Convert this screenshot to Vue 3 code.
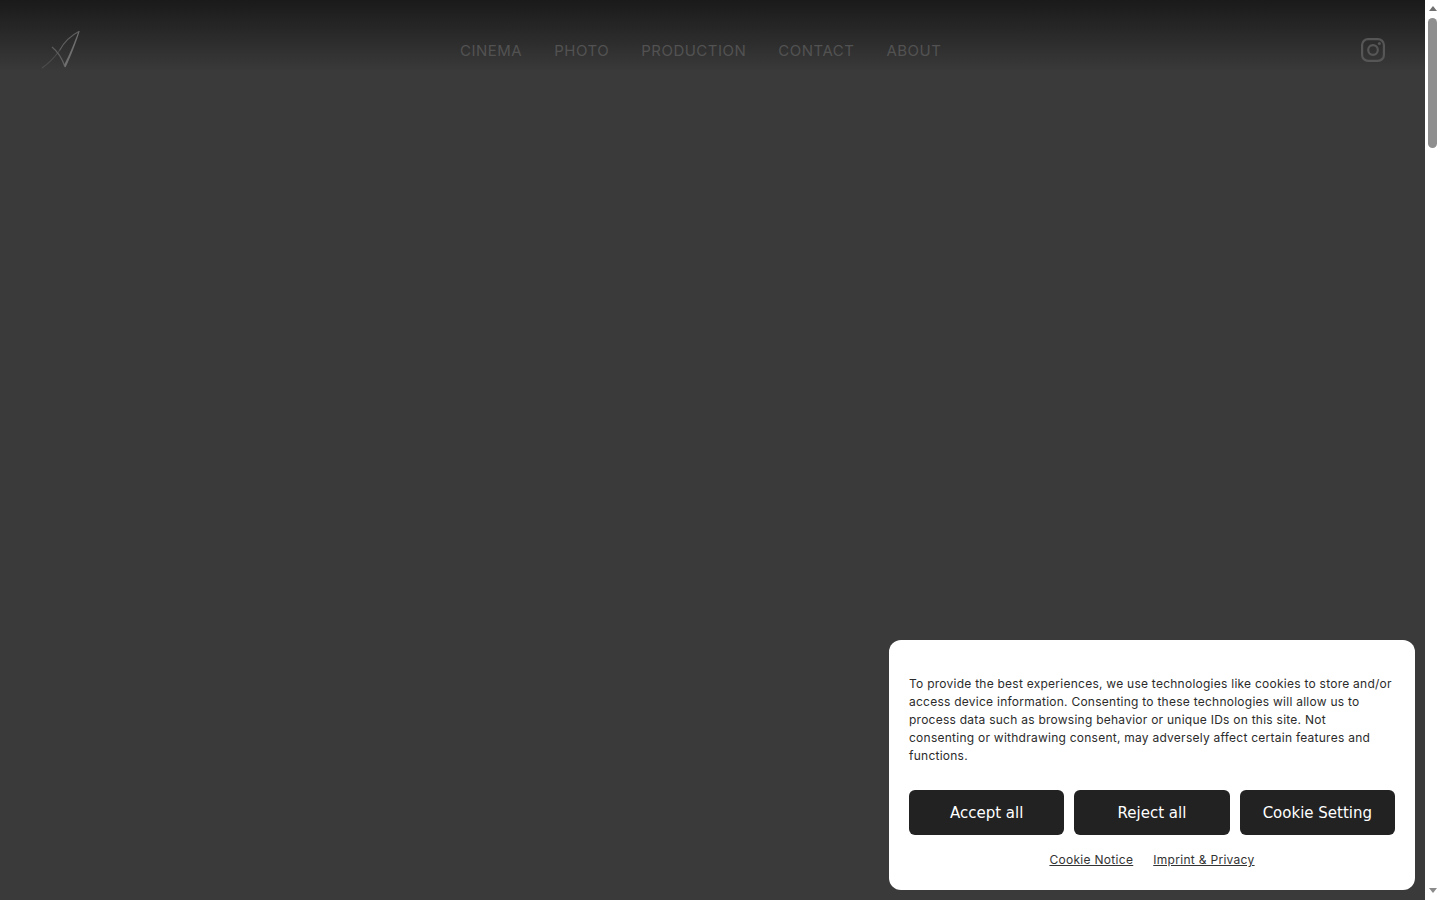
<template>
  <div class="page">
    <div class="viewport">
      <header class="site-header">
        <a class="logo" href="#" aria-label="Home">
          <svg width="40" height="40" viewBox="0 0 40 40">
            <path class="logo-fade" d="M2 38C8 34 14 28 19.500 20.500" />
            <path class="logo-thin" d="M19.500 20.500C23 14 30 6 39.300 1.300" />
            <path class="logo-thin" d="M12 17C17 21 22 28 25 37" />
            <path class="logo-main" d="M39.700 1L38 2.500C35 11 30 24 24 35L25.500 37.500C30.500 27 36 13 39.700 1Z" />
          </svg>
        </a>
        <nav class="main-nav">
          <a v-for="item in navItems" :key="item" href="#">{{ item }}</a>
        </nav>
        <a class="social" href="#" aria-label="Instagram">
          <svg width="24" height="24" viewBox="0 0 24 24">
            <rect x="1.100" y="1.100" width="21.800" height="21.800" rx="6" />
            <circle cx="12" cy="12" r="4.800" />
            <circle class="dot" cx="18.400" cy="5.600" r="1.500" />
          </svg>
        </a>
      </header>
    </div>

    <div class="scrollbar" aria-hidden="true">
      <span class="arrow arrow-up"></span>
      <span class="thumb"></span>
      <span class="arrow arrow-down"></span>
    </div>

    <section class="cookie-banner">
      <p>
        To provide the best experiences, we use technologies like cookies to store and/or<br />
        access device information. Consenting to these technologies will allow us to<br />
        process data such as browsing behavior or unique IDs on this site. Not<br />
        consenting or withdrawing consent, may adversely affect certain features and<br />
        functions.
      </p>
      <div class="cookie-actions">
        <button v-for="label in cookieButtons" :key="label" type="button">{{ label }}</button>
      </div>
      <div class="cookie-links">
        <a href="#">Cookie Notice</a>
        <a href="#">Imprint &amp; Privacy</a>
      </div>
    </section>
  </div>
</template>

<script setup>
const navItems = ['CINEMA', 'PHOTO', 'PRODUCTION', 'CONTACT', 'ABOUT'];
const cookieButtons = ['Accept all', 'Reject all', 'Cookie Setting'];
</script>

<style scoped>
.page {
  display: flex;
  height: 100vh;
  overflow: hidden;
  background: #fff;
}

.viewport {
  flex: 1;
  background: #3a3a3a;
}

.site-header {
  display: flex;
  align-items: center;
  height: 100px;
  padding: 0 40px;
  box-sizing: border-box;
  background: linear-gradient(to bottom, #1a1a1a 0, #3a3a3a 72px);
}

.logo {
  display: block;
  width: 40px;
  height: 40px;
}

.logo svg {
  display: block;
  filter: blur(0.5px);
  opacity: 0.85;
}

.logo-fade {
  fill: none;
  stroke: #505050;
  stroke-width: 1.200;
}

.logo-thin {
  fill: none;
  stroke: #686868;
  stroke-width: 1.200;
}

.logo-main {
  fill: #7a7a7a;
}

.main-nav {
  display: flex;
  gap: 32px;
  margin: 2px 0 0 380px;
}

.main-nav a {
  font-family: Inter, "Liberation Sans", sans-serif;
  font-size: 15px;
  line-height: 20px;
  letter-spacing: 0.5px;
  color: #525252;
  text-decoration: none;
}

.social {
  display: block;
  width: 24px;
  height: 24px;
  margin-left: auto;
}

.social svg {
  display: block;
  fill: none;
  stroke: #565656;
  stroke-width: 2.2;
}

.social .dot {
  fill: #565656;
  stroke: none;
}

.scrollbar {
  display: flex;
  flex-direction: column;
  align-items: center;
  width: 15px;
  height: 100%;
  padding: 6px 0 7px;
  box-sizing: border-box;
  background: #fff;
}

.arrow {
  width: 0;
  height: 0;
  border-left: 4.500px solid transparent;
  border-right: 4.500px solid transparent;
}

.arrow-up {
  border-bottom: 5px solid #707070;
}

.arrow-down {
  margin-top: auto;
  border-top: 5px solid #8a8a8a;
}

.thumb {
  width: 9px;
  height: 130px;
  margin-top: 7px;
  border-radius: 4.500px;
  background: #8f8f8f;
}

.cookie-banner {
  position: fixed;
  right: 25px;
  bottom: 10px;
  width: 526px;
  height: 250px;
  padding: 35px 20px 0;
  box-sizing: border-box;
  background: #fff;
  border-radius: 12px;
}

.cookie-banner p {
  margin: 0;
  font-family: Inter, "Liberation Sans", sans-serif;
  font-size: 12px;
  line-height: 18px;
  letter-spacing: 0.25px;
  color: #2b2b2b;
  white-space: nowrap;
}

.cookie-actions {
  display: flex;
  gap: 10px;
  margin-top: 25px;
}

.cookie-actions button {
  flex: 1;
  height: 45px;
  padding: 0;
  border: 0;
  border-radius: 6px;
  background: #222;
  color: #fff;
  font-family: "DejaVu Sans", sans-serif;
  font-size: 15px;
}

.cookie-links {
  display: flex;
  justify-content: center;
  gap: 20px;
  margin-top: 16px;
}

.cookie-links a {
  font-family: Inter, "Liberation Sans", sans-serif;
  font-size: 12px;
  line-height: 18px;
  letter-spacing: 0.3px;
  color: #333;
}
</style>

<style>
html,
body {
  margin: 0;
}
</style>
